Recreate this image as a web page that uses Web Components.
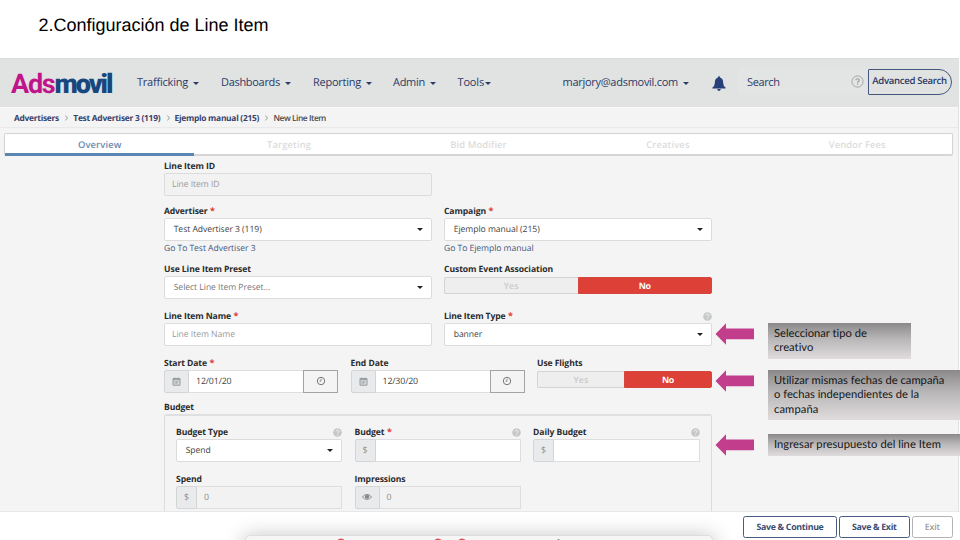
<!DOCTYPE html>
<html lang="es">
<head>
<meta charset="utf-8">
<title>Configuración de Line Item</title>
<style>
html, body { margin: 0; width: 960px; height: 540px; overflow: hidden; background: #fff; }
body { font-family: "Open Sans", "Noto Sans", sans-serif; text-rendering: geometricPrecision; }
</style>
</head>
<body>
<slide-page></slide-page>
<script>
class Base extends HTMLElement {
  constructor() { super(); this.attachShadow({ mode: 'open' }); }
  connectedCallback() {
    if (this.done) return;
    this.done = true;
    const t = document.createElement('template');
    t.innerHTML = '<style>:host{display:block;box-sizing:border-box}*{box-sizing:border-box}' + this.css() + '</style>' + this.html();
    this.shadowRoot.append(t.content.cloneNode(true));
    this.ready();
  }
  a(n, d = '') { return this.getAttribute(n) ?? d; }
  css() { return ''; }
  html() { return '<slot></slot>'; }
  ready() {}
}
const define = (n, c) => customElements.define(n, c);

define('help-dot', class extends Base {
  css() { return ':host{width:9px;height:9px}svg{display:block}'; }
  html() { return `<svg width="9" height="9" viewBox="0 0 9 9"><circle cx="4.5" cy="4.5" r="4.3" fill="#c6c8c8"/><path d="M3.1 3.5c0-2 2.9-1.9 2.9-.2 0 1-1.3 1-1.3 2M4.7 6.2v1" fill="none" stroke="#f4f4f4" stroke-width="1"/></svg>`; }
});

define('form-field', class extends Base {
  css() { return `
    .l{display:flex;align-items:center;height:14px;font-size:8.6px;font-weight:700;color:#2b2b2b;line-height:14px}
    .r{color:#e03a34;margin-left:2.5px;font-size:9px}
    help-dot{margin-left:auto}`; }
  html() { return `<div class="l"><fit-text w="${this.a('lw')}">${this.a('label')}</fit-text>${this.hasAttribute('required') ? '<span class="r">*</span>' : ''}${this.hasAttribute('help') ? '<help-dot></help-dot>' : ''}</div><slot></slot>`; }
});

define('text-box', class extends Base {
  css() { return `
    :host{height:23px;border:1px solid #dcdcdc;border-radius:2px;background:#fff;display:flex;align-items:center;font-size:8.6px;color:#3f3f3f;padding:0 8px 1px 7px}
    :host([select]){padding-left:8.7px}
    :host([muted]){color:#999}
    :host([off]){background:#f2f2f2}
    i{margin-left:auto;border:3px solid transparent;border-top:3.5px solid #222;border-bottom:0}`; }
  html() { return `<slot></slot>${this.hasAttribute('select') ? '<i></i>' : ''}`; }
});

const icons = {
  dollar: '<span>$</span>',
  cal: '<svg width="9" height="9" viewBox="0 0 9 9"><path d="M1 1.5h7v6.7H1z" fill="#dcdfe1" stroke="#969a9d"/><path d="M1 2.700h7M2.8.5v1.6M6.2.5v1.6" fill="none" stroke="#969a9d"/><path d="M2.5 4.3h4M2.5 5.5h4M2.5 6.7h3" stroke="#969a9d" stroke-width=".8" stroke-dasharray="1 .4"/></svg>',
  eye: '<svg width="10" height="8" viewBox="0 0 10 8"><path d="M.4 4Q5-1.2 9.6 4 5 8.8.4 4z" fill="none" stroke="#888" stroke-width=".9"/><circle cx="5" cy="3.6" r="2.2" fill="#858585"/><path d="M4 3.2q.1-.9 1-.9" stroke="#ddd" stroke-width=".5" fill="none"/></svg>'
};
define('addon-box', class extends Base {
  css() { return `
    :host{display:flex;height:23px;font-size:8.8px;color:#444}
    .i{width:var(--iw,21px);border:1px solid #d3d5d6;background:#e9eaeb;display:grid;place-items:center;color:#8b8b8b;border-radius:2px 0 0 2px;padding-bottom:1px}
    .v{flex:1;background:#fff;border:1px solid #dedede;border-left:0;display:flex;align-items:center;padding:0 0 2px 7px}
    :host([off]) .v{background:#f2f2f2;color:#8d8d8d;padding-left:7px}
    .c{width:35px;margin-left:-1px;border:1px solid #a3a3a3;background:#f4f4f4;display:grid;place-items:center;padding-bottom:1px}`; }
  html() { return `<div class="i">${icons[this.a('icon')]}</div><div class="v"><slot></slot></div>${this.hasAttribute('clock') ? '<div class="c"><svg width="10" height="10" viewBox="0 0 10 10"><circle cx="5" cy="5" r="3.7" fill="none" stroke="#777"/><path d="M5 2.7V5.2H3.5" fill="none" stroke="#777" stroke-width=".8"/></svg></div>' : ''}`; }
});

define('yes-no', class extends Base {
  css() { return `
    :host{display:flex;height:17px;margin-top:1px;font-size:8.8px;font-weight:700}
    div{flex:1;display:grid;place-items:center}
    .y{border:1px solid #d4d4d4;border-right:0;background:#eee;color:#c9c9c9;border-radius:2px 0 0 2px;font-weight:600}
    .n{background:#dc4037;color:#fff;border-radius:0 2px 2px 0;border:1px solid #d4463e}`; }
  html() { return '<div class="y"><fit-text w="15">Yes</fit-text></div><div class="n"><fit-text w="12">No</fit-text></div>'; }
});

define('nav-item', class extends Base {
  css() { return `:host{display:flex;align-items:center;font-size:11px;color:#2c3a66;white-space:nowrap;padding-bottom:1px}
    i{margin:2px 0 0 var(--g,4.5px);border:3.2px solid transparent;border-top:3.2px solid #2c3a66;border-bottom:0}`; }
  html() { return `<fit-text w="${this.a('w')}"><slot></slot></fit-text><i></i>`; }
});

define('top-nav', class extends Base {
  css() { return `
    :host{height:49px;width:959px;background:#e0e3e2;display:grid;grid-template-columns:126px 84px 92px 80px 64.5px 105px 149px 26px 130px 84px;align-items:center;padding-left:11px;border-top:1px solid #dadcdb}
    .logo{font:700 27px/30px Roboto,"Liberation Sans",sans-serif;color:#c0148a;white-space:nowrap;display:flex;padding-top:2px}
    .logo b{color:#17477f}
    .bell{display:block;margin-top:1px}
    .s{height:27px;background:#e3e5e4;border-radius:3px;display:flex;align-items:center;justify-content:space-between;padding:0 4px 0 9.5px;margin-top:-3px;font-size:11px;color:#2c3a66}
    .s fit-text{margin-top:1.5px}
    .s svg{margin-top:-1px}
    .adv{height:26px;border:1px solid #46577f;border-radius:1px 13px 13px 1px;display:grid;place-items:center;font-size:9.6px;font-weight:600;color:#2c3a66;margin-top:-3px;padding-bottom:2px}`; }
  html() { return `
    <div class="logo"><fit-text w="43.5">Ads</fit-text><b><fit-text w="56.8">movil</fit-text></b></div>
    <nav-item w="51">Trafficking</nav-item><nav-item w="59">Dashboards</nav-item><nav-item w="48">Reporting</nav-item><nav-item w="32">Admin</nav-item><nav-item w="26.5" style="--g:.5px">Tools</nav-item><nav-item w="115.5">marjory@adsmovil.com</nav-item>
    <svg class="bell" width="14" height="16" viewBox="0 0 14 16"><path d="M7 .3c.7 0 1 .5 1 1.1 2.3.6 3 2.4 3.1 4.6.2 3 .8 4.4 2.5 5.6v1H.4v-1C2.100 10.400 2.700 9 2.900 6 3 3.800 3.700 2 6 1.400 6 .8 6.300.3 7 .3zM5.300 13h3.400c-.1 2.600-3.300 2.600-3.400 0z" fill="#27407a"/></svg>
    <div class="s"><fit-text w="32.5">Search</fit-text><svg width="13" height="13" viewBox="0 0 13 13"><circle cx="6.500" cy="6.500" r="5.600" fill="none" stroke="#a2a5a6"/><path d="M4.900 5.300c0-2.300 3.300-2 3.300 0 0 1.300-1.600 1.200-1.600 2.500M6.600 8.600v1.200" fill="none" stroke="#969a9b" stroke-width="1.100"/></svg></div>
    <div class="adv"><fit-text w="74.5">Advanced Search</fit-text></div>`; }
});

define('crumb-bar', class extends Base {
  css() { return `
    :host{height:21px;display:flex;align-items:center;padding:1px 0 0 14px;font-size:8.4px;font-weight:700;color:#34426d;border-top:1px solid #f9f9f9;border-bottom:1px solid #e9e9e9}
    svg{margin:0 5px 0 6.3px}
    .c{font-weight:600;color:#4b4b4b}`; }
  html() {
    const s = '<svg width="3" height="6" viewBox="0 0 3 6"><path d="M.3.500 2.500 3 .3 5.500" fill="none" stroke="#8d8d8d" stroke-width=".9"/></svg>';
    return `<fit-text w="45">Advertisers</fit-text>${s}<fit-text w="87">Test Advertiser 3 (119)</fit-text>${s}<fit-text w="84.5">Ejemplo manual (215)</fit-text>${s}<fit-text class="c" w="52.5">New Line Item</fit-text>`;
  }
});

define('step-tabs', class extends Base {
  css() { return `
    :host{margin:5px 0 0 4px;width:949px;height:23px;border:1px solid #d2d2d2;border-bottom:2px solid #d6d6d6;border-radius:2px;background:#fff;display:grid;grid-template-columns:repeat(5,1fr);font-size:9.4px;font-weight:600;color:#dcdcdc}
    div{display:grid;place-items:center;height:20px}
    .on{color:#6c8bb3;border-bottom:3px solid #5b85b3;padding-top:2px;height:22px}`; }
  html() { return [['Overview', 43.5], ['Targeting', 44], ['Bid Modifier', 56.5], ['Creatives', 43.5], ['Vendor Fees', 57]]
    .map(([t, w], i) => `<div class="${i ? '' : 'on'}"><fit-text w="${w}">${t}</fit-text></div>`).join(''); }
});

define('line-form', class extends Base {
  css() { return `
    :host{padding:3px 0 0 164px;width:712px}
    .two{display:grid;grid-template-columns:268px 268px;gap:12px}
    .dates{display:grid;grid-template-columns:174px 174px 175px;gap:12.500px;height:44px}
    .link{font-size:8.6px;color:#46577f;height:14px;line-height:14px}
    .t{font-size:8.6px;font-weight:700;color:#2b2b2b;line-height:14px;height:14px}
    fieldset{margin:0;min-width:0;height:110px;border:1px solid #dcdcdc;border-top:2px solid #dfdfdf;border-radius:3px;padding:9px 11px 0;display:grid;grid-template-columns:166px 166px 166.500px;grid-template-rows:47px 40px;column-gap:12.500px}`; }
  html() { return `
    <div class="two" style="height:45px"><form-field label="Line Item ID" lw="51"><text-box off muted><fit-text w="47.5">Line Item ID</fit-text></text-box></form-field></div>
    <div class="two" style="height:58px">
      <form-field label="Advertiser" lw="43.5" required><text-box select><fit-text w="88">Test Advertiser 3 (119)</fit-text></text-box><div class="link"><fit-text w="91.5">Go To Test Advertiser 3</fit-text></div></form-field>
      <form-field label="Campaign" lw="42" required><text-box select><fit-text w="86">Ejemplo manual (215)</fit-text></text-box><div class="link"><fit-text w="89.5">Go To Ejemplo manual</fit-text></div></form-field>
    </div>
    <div class="two" style="height:47px">
      <form-field label="Use Line Item Preset" lw="87"><text-box select style="color:#777"><fit-text w="96.500">Select Line Item Preset...</fit-text></text-box></form-field>
      <form-field label="Custom Event Association" lw="109"><yes-no></yes-no></form-field>
    </div>
    <div class="two" style="height:47px">
      <form-field label="Line Item Name" lw="67" required><text-box muted><fit-text w="63">Line Item Name</fit-text></text-box></form-field>
      <form-field label="Line Item Type" lw="61.500" required help><text-box select><fit-text w="28.500">banner</fit-text></text-box></form-field>
    </div>
    <div class="dates">
      <form-field label="Start Date" lw="43" required><addon-box icon="cal" clock style="--iw:25px"><fit-text w="35.500">12/01/20</fit-text></addon-box></form-field>
      <form-field label="End Date" lw="38"><addon-box icon="cal" clock style="--iw:25px"><fit-text w="35.500">12/30/20</fit-text></addon-box></form-field>
      <form-field label="Use Flights" lw="45.500"><yes-no></yes-no></form-field>
    </div>
    <div class="t"><fit-text w="30">Budget</fit-text></div>
    <fieldset>
      <form-field label="Budget Type" lw="52" help><text-box select><fit-text w="25">Spend</fit-text></text-box></form-field>
      <form-field label="Budget" lw="30" required help><addon-box icon="dollar"></addon-box></form-field>
      <form-field label="Daily Budget" lw="53.500" help><addon-box icon="dollar"></addon-box></form-field>
      <form-field label="Spend" lw="26"><addon-box off icon="dollar">0</addon-box></form-field>
      <form-field label="Impressions" lw="51"><addon-box off icon="eye" style="--iw:25px">0</addon-box></form-field>
    </fieldset>`; }
});

define('action-bar', class extends Base {
  css() { return `
    :host{height:29px;width:960px;background:#fff;border-top:1px solid #e8e8e8;display:flex;justify-content:flex-end;align-items:flex-start;gap:2px;padding:4px 7px 0 0;position:relative;overflow:hidden}
    .b{height:22px;border:1px solid #4b5c82;border-radius:2.500px;background:#fff;color:#3a4b74;font-size:8.800px;font-weight:700;display:grid;place-items:center;position:relative}
    .x{border-color:#b3b3b3;color:#999;font-weight:600}
    .dock{position:absolute;left:245px;top:23px;width:468px;height:30px;border-radius:5px;background:#f6f6f6;border:1px solid #dedede;box-shadow:0 2px 20px 2px rgba(0,0,0,.22)}
    .dock svg{display:block}`; }
  html() { return `<div class="dock"><svg width="466" height="6" viewBox="0 0 466 6"><g fill="#d9544c"><circle cx="95" cy="6.500" r="4"/><circle cx="192" cy="6.500" r="4"/><circle cx="216" cy="6.500" r="4"/></g><circle cx="312.500" cy="4" r="1" fill="#777"/></svg></div>
    <div class="b" style="width:94px"><fit-text w="67">Save &amp; Continue</fit-text></div><div class="b" style="width:70.500px"><fit-text w="44.500">Save &amp; Exit</fit-text></div><div class="b x" style="width:41.500px"><fit-text w="15">Exit</fit-text></div>`; }
});

define('call-out', class extends Base {
  css() { return `
    :host{position:absolute;left:715px;display:flex;align-items:flex-start}
    svg{flex:none}
    .n{margin-left:13.500px;height:100%;width:193px;padding:4px 0 0 6.500px;background:linear-gradient(#8a8889,#b9b7b8 45%,#e0dcde);font:11.200px/14.300px Lato,"Open Sans",sans-serif;color:#161616;flex:none}
    :host([narrow]) .n{width:143px}
    ::slotted(fit-text){display:block}`; }
  html() { return `<svg width="39" height="22" viewBox="0 0 39 22"><path d="M.500 11 11 .300V5.500H39V16.300H11V21.700z" fill="#c23d8c"/></svg><div class="n"><slot></slot></div>`; }
});

define('slide-page', class extends Base {
  css() { return `
    :host{position:relative;width:960px;height:540px;overflow:hidden;display:flex;flex-direction:column}
    h1{margin:0;height:58px;padding:14px 0 0 38.500px;font:400 18px/22px "Liberation Sans",Arial,sans-serif;color:#000;flex:none}
    top-nav,action-bar{flex:none}
    main{flex:1;min-height:0;overflow:hidden;background:#f4f4f4;width:959px;border-right:1px solid #e2e2e2}`; }
  html() { return `
    <h1><fit-text w="230">2.Configuración de Line Item</fit-text></h1>
    <top-nav></top-nav>
    <main><crumb-bar></crumb-bar><step-tabs></step-tabs><line-form></line-form></main>
    <action-bar></action-bar>
    <call-out narrow style="top:323px;height:36px"><fit-text w="93">Seleccionar tipo de</fit-text><fit-text w="39.500">creativo</fit-text></call-out>
    <call-out style="top:370px;height:50px"><fit-text w="170.500">Utilizar mismas fechas de campaña</fit-text><fit-text w="145">o fechas independientes de la</fit-text><fit-text w="44.500">campaña</fit-text></call-out>
    <call-out style="top:434px;height:22px"><fit-text w="167">Ingresar presupuesto del line Item</fit-text></call-out>`; }
});

/* Spreads its text over the width given by the w attribute. */
define('fit-text', class extends Base {
  css() { return ':host{display:inline-block;white-space:nowrap}span{display:inline-block}'; }
  html() { return '<span><slot></slot></span>'; }
  ready() {
    const span = this.shadowRoot.querySelector('span');
    const slot = this.shadowRoot.querySelector('slot');
    const text = slot.assignedNodes({ flatten: true }).map(n => n.textContent).join('');
    const w = parseFloat(this.a('w'));
    const natural = span.getBoundingClientRect().width;
    if (w && natural && text.length) span.style.letterSpacing = ((w - natural) / text.length).toFixed(3) + 'px';
  }
});
</script>
</body>
</html>
